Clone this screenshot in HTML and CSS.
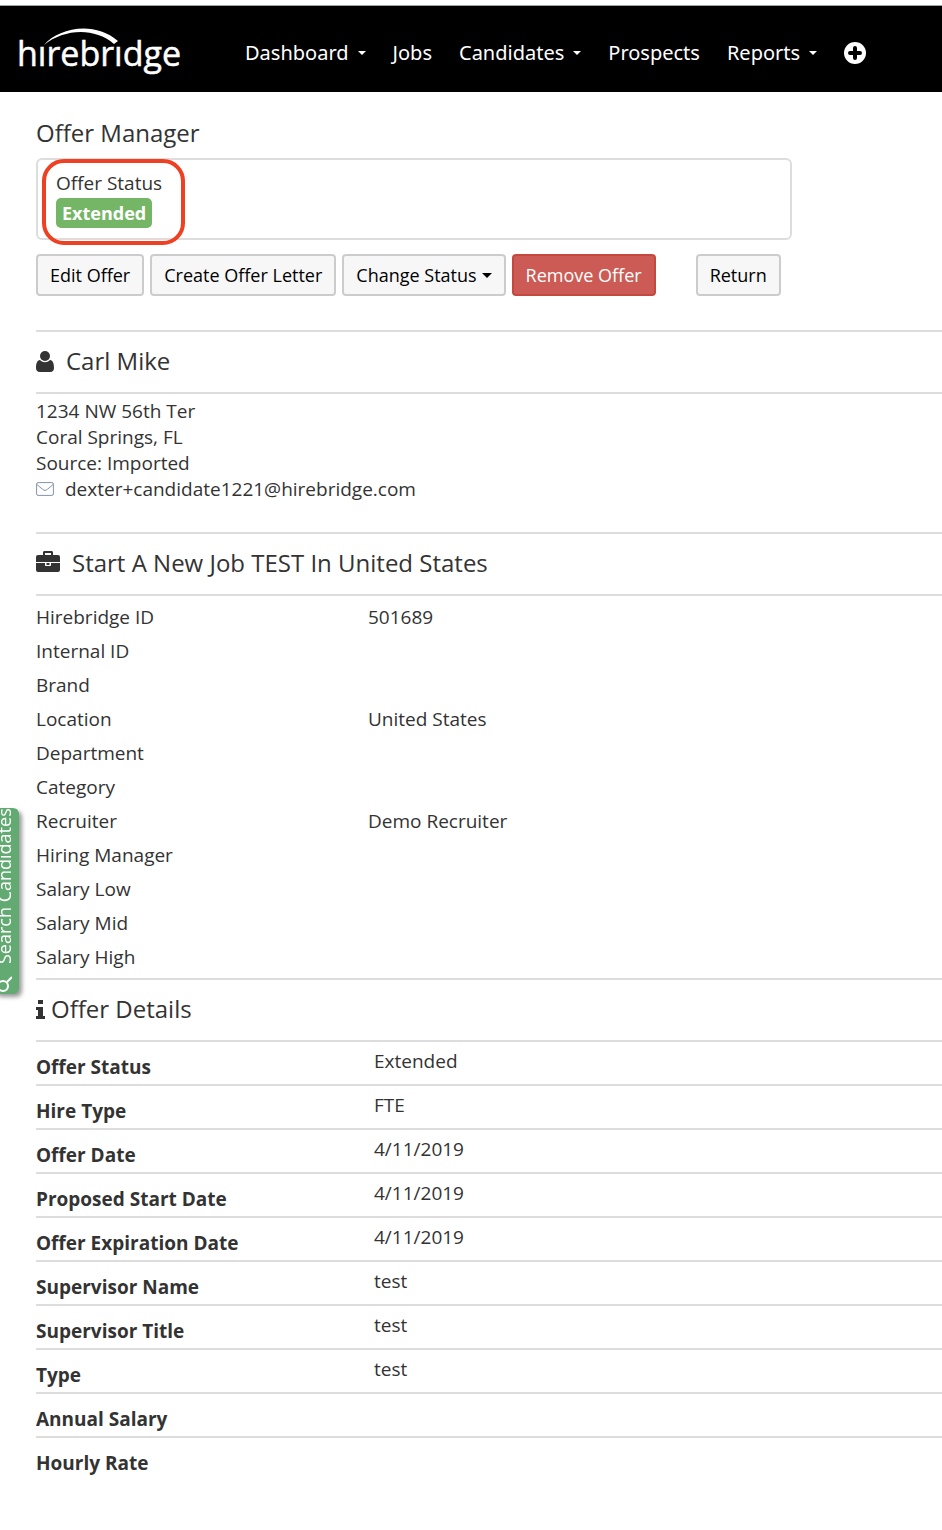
FILE: index.html
```
<!DOCTYPE html>
<html lang="en">
<head>
  <meta charset="UTF-8" />
  <meta name="viewport" content="width=device-width, initial-scale=1.0" />
  <title>Offer Manager</title>
  <link rel="stylesheet" href="styles.css">
</head>
<body>
  <header class="navbar">
    <a class="logo" href="#" aria-label="hirebridge">
      <svg width="164" height="52" viewBox="0 0 164 52">
        <text x="-1" y="42">hırebrıdge</text>
        <path d="M26 21 C40 4 76 -4 100 17 L96 20 C76 3 46 5 26 21 Z" />
      </svg>
    </a>
    <nav class="nav-links">
      <a href="#">Dashboard <span class="caret"></span></a>
      <a href="#">Jobs</a>
      <a href="#">Candidates <span class="caret"></span></a>
      <a href="#">Prospects</a>
      <a href="#">Reports <span class="caret"></span></a>
      <a href="#" aria-label="Add">
        <svg width="22" height="22" viewBox="0 0 22 22">
          <circle cx="11" cy="11" r="11" fill="#fff" />
          <path d="M11 6v10M6 11h10" stroke="#000" stroke-width="4" stroke-linecap="round" />
        </svg>
      </a>
    </nav>
  </header>

  <button class="search-tab" type="button">
    <svg width="16" height="16" viewBox="0 0 16 16">
      <circle cx="9" cy="6" r="5" />
      <path d="M5 10l-5 5" />
    </svg>
    <span>Search Candidates</span>
  </button>

  <main class="container">
    <h1>Offer Manager</h1>

    <div class="status-box">
      <div class="status-title">Offer Status</div>
      <span class="label-success">Extended</span>
      <div class="highlight"></div>
    </div>

    <div class="actions">
      <button class="btn" type="button">Edit Offer</button>
      <button class="btn" type="button">Create Offer Letter</button>
      <button class="btn" type="button">Change Status <span class="caret"></span></button>
      <button class="btn btn-danger" type="button">Remove Offer</button>
      <button class="btn btn-return" type="button">Return</button>
    </div>

    <section class="candidate">
      <h2>
        <svg class="icon-user" width="18" height="21" viewBox="0 0 18 21">
          <circle cx="9" cy="5" r="5" />
          <path d="M4 9C1 9 0 13 0 17c0 2 1 4 4 4h10c3 0 4-2 4-4 0-4-1-8-4-8-3 3-7 3-10 0z" />
        </svg>
        Carl Mike
      </h2>
      <address>
        <div>1234 NW 56th Ter</div>
        <div>Coral Springs, FL</div>
        <div>Source: Imported</div>
        <div class="email">
          <svg width="18" height="14" viewBox="0 0 18 14">
            <rect x="0.6" y="0.6" width="16.8" height="12.8" rx="1.5" />
            <path d="M1 2.500c2 2 4 3.500 5.500 4.700 2 1.600 3 1.600 5 0C13 6 15 4.500 17 2.500" />
          </svg>
          <a href="#">dexter+candidate1221@hirebridge.com</a>
        </div>
      </address>
    </section>

    <section>
      <h2>
        <svg class="icon-job" width="24" height="21" viewBox="0 0 24 21">
          <path fill-rule="evenodd" d="M7 4V1.500C7 .600 7.600 0 8.500 0h7c.900 0 1.500.600 1.500 1.500V4h5a2 2 0 0 1 2 2v5H0V6a2 2 0 0 1 2-2zM9 4h6V2H9z" />
          <path d="M0 12h9v2c0 .600.400 1 1 1h4c.600 0 1-.400 1-1v-2h9v7a2 2 0 0 1-2 2H2a2 2 0 0 1-2-2z" />
          <path d="M10.500 12h3v2h-3z" />
        </svg>
        Start A New Job TEST In United States
      </h2>
      <table class="job-table">
        <tr><th scope="row">Hirebridge ID</th><td>501689</td></tr>
        <tr><th scope="row">Internal ID</th><td></td></tr>
        <tr><th scope="row">Brand</th><td></td></tr>
        <tr><th scope="row">Location</th><td>United States</td></tr>
        <tr><th scope="row">Department</th><td></td></tr>
        <tr><th scope="row">Category</th><td></td></tr>
        <tr><th scope="row">Recruiter</th><td>Demo Recruiter</td></tr>
        <tr><th scope="row">Hiring Manager</th><td></td></tr>
        <tr><th scope="row">Salary Low</th><td></td></tr>
        <tr><th scope="row">Salary Mid</th><td></td></tr>
        <tr><th scope="row">Salary High</th><td></td></tr>
      </table>
    </section>

    <section>
      <h2>
        <svg class="icon-info" width="9" height="19" viewBox="0 0 9 19">
          <path d="M2 0h5v4H2zM0 7h7v9h2v3H0v-3h2v-6H0z" />
        </svg>
        Offer Details
      </h2>
      <table class="offer-table">
        <tr><th scope="row">Offer Status</th><td>Extended</td></tr>
        <tr><th scope="row">Hire Type</th><td>FTE</td></tr>
        <tr><th scope="row">Offer Date</th><td>4/11/2019</td></tr>
        <tr><th scope="row">Proposed Start Date</th><td>4/11/2019</td></tr>
        <tr><th scope="row">Offer Expiration Date</th><td>4/11/2019</td></tr>
        <tr><th scope="row">Supervisor Name</th><td>test</td></tr>
        <tr><th scope="row">Supervisor Title</th><td>test</td></tr>
        <tr><th scope="row">Type</th><td>test</td></tr>
        <tr><th scope="row">Annual Salary</th><td></td></tr>
        <tr><th scope="row">Hourly Rate</th><td></td></tr>
      </table>
    </section>
  </main>
</body>
</html>
```
FILE: styles.css
```
* {
  box-sizing: border-box;
}
body {
  margin: 0;
  padding-top: 5px;
  background: #fff;
  color: #333;
  font-family: "Open Sans", sans-serif;
  font-size: 19px;
  line-height: 26px;
}
a {
  color: inherit;
  text-decoration: none;
}
.navbar {
  display: flex;
  align-items: center;
  height: 87px;
  padding-left: 18px;
  background: #000;
  border-top: 1px solid #9aa59f;
  color: #fff;
}
.logo {
  display: flex;
  padding-top: 2px;
  margin-right: 63px;
}
.logo svg {
  fill: #fff;
  overflow: visible;
}
.logo text {
  font-family: "Open Sans", sans-serif;
  font-size: 34px;
  stroke: #fff;
  stroke-width: 0.5;
}
.nav-links {
  display: flex;
  align-items: center;
  gap: 27px;
  padding-top: 8px;
  font-family: "Noto Sans", sans-serif;
  font-size: 20px;
}
.nav-links a {
  display: flex;
  align-items: center;
  gap: 9px;
}
.caret {
  display: inline-block;
  border-top: 5px solid;
  border-left: 5px solid transparent;
  border-right: 5px solid transparent;
}
.nav-links .caret {
  border-width: 4px 4px 0;
}
/* the left part of the tab is tucked under the window edge */
.search-tab {
  position: fixed;
  left: -7px;
  top: 808px;
  display: flex;
  align-items: center;
  gap: 12px;
  width: 26px;
  height: 186px;
  padding: 2px 0 0 4px;
  background: #62aa71;
  color: #fff;
  border: none;
  border-radius: 6px;
  box-shadow: -3px -3px 4px rgba(0,0,0,0.4);
  font-family: inherit;
  font-size: 18px;
  line-height: 26px;
  white-space: nowrap;
  writing-mode: vertical-rl;
  transform: rotate(180deg);
  cursor: pointer;
}
.search-tab svg {
  flex: none;
  fill: none;
  stroke: #fff;
  stroke-width: 2;
}
.container {
  padding-left: 36px;
}
h1, h2 {
  margin: 0;
  font-size: 24px;
  font-weight: 400;
}
h1 {
  padding: 24px 0 8px;
  line-height: 34px;
}
h2 {
  display: flex;
  align-items: center;
  height: 64px;
  padding-bottom: 2px;
  border-top: 2px solid #ddd;
  border-bottom: 2px solid #ddd;
}
h2 svg {
  fill: #333;
}
.icon-user, .icon-job {
  margin-right: 12px;
}
.icon-job {
  margin-bottom: 4px;
}
.icon-info {
  margin-right: 6px;
}
.status-box {
  position: relative;
  max-width: 756px;
  margin-right: 24px;
  height: 82px;
  padding: 10px 18px;
  border: 2px solid #ddd;
  border-radius: 6px;
}
.label-success {
  display: inline-block;
  margin-top: 2px;
  padding: 0 6px;
  background: #75b666;
  color: #fff;
  border-radius: 5px;
  font-size: 18px;
  font-weight: 700;
  line-height: 30px;
}
/* red marker around the current status */
.highlight {
  position: absolute;
  top: -1px;
  left: 4px;
  width: 143px;
  height: 86px;
  border: 4px solid #ee4023;
  border-radius: 22px;
}
.actions {
  display: flex;
  flex-wrap: wrap;
  gap: 6px;
  margin: 14px 0 34px;
}
.btn {
  display: flex;
  align-items: center;
  gap: 5px;
  padding: 6px 12px;
  background: #f7f7f7;
  color: #000;
  border: 2px solid #ccc;
  border-radius: 4px;
  font-family: inherit;
  font-size: 18px;
  line-height: 26px;
  cursor: pointer;
}
.btn-danger {
  background: #cb5b54;
  border-color: #c5483f;
  color: #fff;
}
.btn-return {
  margin-left: 34px;
}
address {
  padding: 4px 0 30px;
  font-style: normal;
}
.email {
  display: flex;
  align-items: center;
  gap: 11px;
}
.email svg {
  fill: none;
  stroke: #8393a7;
}
table {
  width: 100%;
  border-spacing: 0;
  table-layout: fixed;
}
th, td {
  padding: 4px 0;
  text-align: left;
  vertical-align: top;
}
th {
  width: 332px;
}
.job-table {
  margin: 4px 0;
}
.job-table th {
  font-weight: 400;
}
.job-table tr {
  height: 34px;
}
.offer-table tr {
  height: 44px;
}
.offer-table th, .offer-table td {
  border-bottom: 2px solid #ddd;
}
.offer-table tr:last-child th, .offer-table tr:last-child td {
  border-bottom: none;
}
.offer-table th {
  width: 338px;
  padding-top: 12px;
}
.offer-table td {
  padding-top: 6px;
}
```
